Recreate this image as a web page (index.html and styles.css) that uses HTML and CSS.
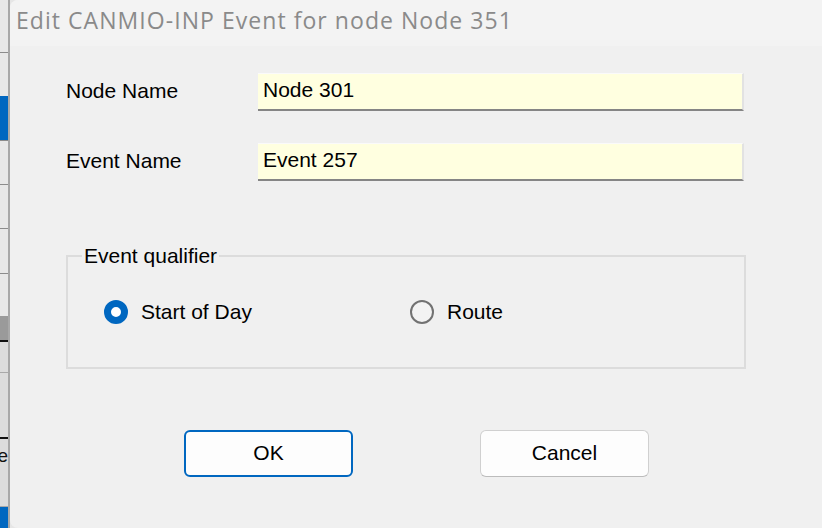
FILE: index.html
```html
<!DOCTYPE html>
<html lang="en">
<head>
<meta charset="utf-8">
<title>Edit CANMIO-INP Event</title>
<link rel="stylesheet" href="styles.css">
</head>
<body>
<div class="backdrop">
  <div class="bd-row h52"></div>
  <div class="bd-line"></div>
  <div class="bd-row h43"></div>
  <div class="bd-row bd-blue h44"></div>
  <div class="bd-line"></div>
  <div class="bd-row h43"></div>
  <div class="bd-line"></div>
  <div class="bd-row h43"></div>
  <div class="bd-line"></div>
  <div class="bd-row h44"></div>
  <div class="bd-line"></div>
  <div class="bd-row h42"></div>
  <div class="bd-row bd-dark h24"></div>
  <div class="bd-line bd-black"></div>
  <div class="bd-row bd-sel h30"></div>
  <div class="bd-line bd-soft"></div>
  <div class="bd-row bd-sel h64"></div>
  <div class="bd-line bd-black"></div>
  <div class="bd-row bd-sel bd-text h67"><span>Handle</span></div>
  <div class="bd-line bd-soft"></div>
  <div class="bd-row bd-blue bd-fill"></div>
</div>

<div class="dialog">
  <div class="titlebar">Edit CANMIO-INP Event for node Node 351</div>
  <div class="content">
    <div class="field-row">
      <label class="field-label" for="nodeName">Node Name</label>
      <input class="field-input" id="nodeName" type="text" value="Node 301" readonly>
    </div>
    <div class="field-row">
      <label class="field-label" for="eventName">Event Name</label>
      <input class="field-input" id="eventName" type="text" value="Event 257" readonly>
    </div>

    <fieldset class="group">
      <legend class="group-legend">Event qualifier</legend>
      <div class="radio-row">
        <div class="radio-item">
          <span class="radio radio-on"></span>
          <span class="radio-label">Start of Day</span>
        </div>
        <div class="radio-item">
          <span class="radio"></span>
          <span class="radio-label">Route</span>
        </div>
      </div>
    </fieldset>

    <div class="buttons">
      <button class="btn btn-default" type="button">OK</button>
      <button class="btn" type="button">Cancel</button>
    </div>
  </div>
</div>
</body>
</html>
```

FILE: styles.css
```css
html, body {
  margin: 0;
  padding: 0;
}

body {
  width: 822px;
  height: 528px;
  overflow: hidden;
  display: flex;
  background: #e6e6e6;
  font-family: "Liberation Sans", Arial, sans-serif;
}

/* Background window strip on the left */
.backdrop {
  width: 8px;
  flex: none;
  display: flex;
  flex-direction: column;
  border-right: 2px solid #a8a8a8;
  background: #e8e8e8;
}

.bd-row {
  flex: none;
  background: #e8e8e8;
}

.bd-line {
  flex: none;
  height: 1px;
  background: #8c8c8c;
}

.bd-soft { background: #a9a9a9; }
.bd-black { height: 2px; background: #111; }
.bd-blue { background: #0067c0; }
.bd-dark { background: #9a9a9a; }
.bd-sel { background: #dcdcdc; }
.bd-fill { flex: 1; }

.h24 { height: 24px; }
.h30 { height: 30px; }
.h42 { height: 42px; }
.h43 { height: 43px; }
.h44 { height: 44px; }
.h52 { height: 52px; }
.h64 { height: 64px; }
.h67 { height: 67px; }

.bd-text {
  display: flex;
  justify-content: flex-end;
  overflow: hidden;
  font-size: 19px;
  line-height: 22px;
  padding-top: 6px;
  box-sizing: border-box;
  color: #111;
  white-space: nowrap;
}

/* Dialog */
.dialog {
  flex: 1;
  display: flex;
  flex-direction: column;
  background: #f0f0f0;
  border-radius: 8px 0 0 8px;
  overflow: hidden;
}

.titlebar {
  height: 46px;
  box-sizing: border-box;
  padding: 0 0 6px 6px;
  line-height: 40px;
  background: #f3f3f3;
  color: #8a8a8a;
  font-family: "Open Sans", "Noto Sans", sans-serif;
  font-size: 23px;
  letter-spacing: 1.05px;
  white-space: nowrap;
}

.content {
  display: flex;
  flex-direction: column;
  padding: 27px 0 0 56px;
  font-size: 21px;
  color: #000;
}

.field-row {
  display: flex;
  align-items: center;
  height: 38px;
  margin-bottom: 32px;
}

.field-row + .field-row {
  margin-bottom: 0;
}

.field-label {
  width: 192px;
  line-height: 24px;
  padding-bottom: 3px;
}

.field-input {
  width: 486px;
  height: 38px;
  box-sizing: border-box;
  margin: 0;
  padding: 0 0 3px 5px;
  border: 0;
  border-top: 1px solid #fafafa;
  border-right: 2px solid #e2e2e2;
  border-bottom: 2px solid #858585;
  background: #ffffe0;
  font-family: "Liberation Sans", Arial, sans-serif;
  font-size: 21px;
  color: #000;
  outline: none;
}

/* Group box */
.group {
  width: 680px;
  box-sizing: border-box;
  margin: 63px 0 0 0;
  padding: 32px 0 43px 14px;
  min-width: 0;
  border: 2px solid #dcdcdc;
  border-radius: 0;
}

.group-legend {
  padding: 0 2px;
  line-height: 24px;
  font-size: 21px;
}

.radio-row {
  display: grid;
  grid-template-columns: 306px auto;
  padding-left: 22px;
}

.radio-item {
  display: flex;
  align-items: center;
  gap: 13px;
  height: 24px;
}

.radio {
  width: 24px;
  height: 24px;
  box-sizing: border-box;
  border-radius: 50%;
  border: 2px solid #727272;
  background: #f3f3f3;
  flex: none;
}

.radio-on {
  border: 7px solid #0067c0;
  background: #ffffff;
}

.radio-label {
  line-height: 24px;
  padding-bottom: 1px;
}

/* Buttons */
.buttons {
  display: flex;
  gap: 127px;
  margin: 61px 0 0 118px;
}

.btn {
  width: 169px;
  height: 47px;
  box-sizing: border-box;
  margin: 0;
  padding: 0 0 1px 0;
  border: 1px solid #d0d0d0;
  border-bottom-color: #bcbcbc;
  border-radius: 6px;
  background: #fdfdfd;
  font-family: "Liberation Sans", Arial, sans-serif;
  font-size: 21px;
  color: #000;
}

.btn-default {
  border: 2px solid #0067c0;
}
```
